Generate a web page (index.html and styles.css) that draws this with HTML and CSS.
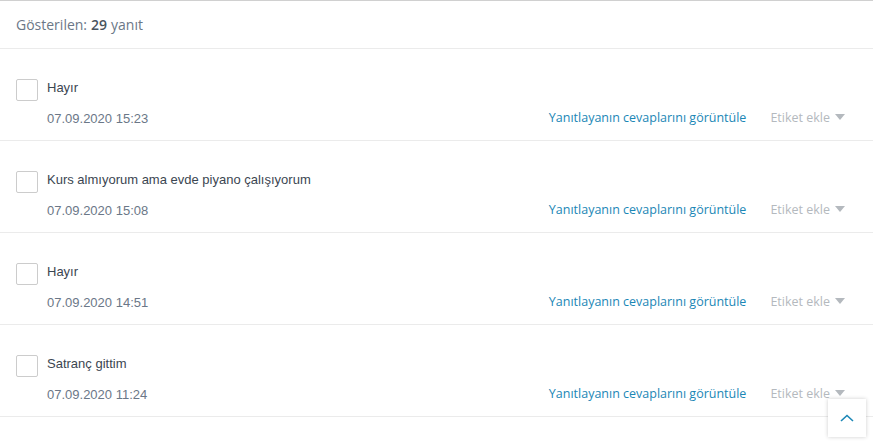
FILE: index.html
```html
<!DOCTYPE html>
<html lang="tr">
<head>
    <meta charset="UTF-8">
    <meta name="viewport" content="width=device-width, initial-scale=1.0">
    <title>Yanıtlar</title>
    <link rel="stylesheet" href="styles.css">
</head>
<body>

    <div class="responses">
        <div class="summary">Gösterilen: <strong>29</strong> yanıt</div>

        <div class="response">
            <span class="check"></span>
            <div class="body">
                <div class="answer">Hayır</div>
                <div class="meta">
                    <span class="date">07.09.2020 15:23</span>
                    <div class="actions">
                        <a class="view" href="#">Yanıtlayanın cevaplarını görüntüle</a>
                        <span class="tag">Etiket ekle <span class="caret"></span></span>
                    </div>
                </div>
            </div>
        </div>

        <div class="response">
            <span class="check"></span>
            <div class="body">
                <div class="answer">Kurs almıyorum ama evde piyano çalışıyorum</div>
                <div class="meta">
                    <span class="date">07.09.2020 15:08</span>
                    <div class="actions">
                        <a class="view" href="#">Yanıtlayanın cevaplarını görüntüle</a>
                        <span class="tag">Etiket ekle <span class="caret"></span></span>
                    </div>
                </div>
            </div>
        </div>

        <div class="response">
            <span class="check"></span>
            <div class="body">
                <div class="answer">Hayır</div>
                <div class="meta">
                    <span class="date">07.09.2020 14:51</span>
                    <div class="actions">
                        <a class="view" href="#">Yanıtlayanın cevaplarını görüntüle</a>
                        <span class="tag">Etiket ekle <span class="caret"></span></span>
                    </div>
                </div>
            </div>
        </div>

        <div class="response">
            <span class="check"></span>
            <div class="body">
                <div class="answer">Satranç gittim</div>
                <div class="meta">
                    <span class="date">07.09.2020 11:24</span>
                    <div class="actions">
                        <a class="view" href="#">Yanıtlayanın cevaplarını görüntüle</a>
                        <span class="tag">Etiket ekle <span class="caret"></span></span>
                    </div>
                </div>
            </div>
        </div>
    </div>

    <button class="to-top" aria-label="Yukarı">
        <svg width="14" height="8" viewBox="0 0 14 8"><path d="M1 7 L7 1.5 L13 7" fill="none" stroke="#1b87b6" stroke-width="1.6"/></svg>
    </button>

</body>
</html>
```

FILE: styles.css
```css
* {
    margin: 0;
    padding: 0;
    box-sizing: border-box;
}

body {
    background: #ffffff;
    font-family: 'Liberation Sans', Arial, sans-serif;
    color: #333e48;
}

.responses {
    border-top: 1px solid #d0d0d0;
}

.summary {
    height: 48px;
    padding: 0 16px;
    display: flex;
    align-items: center;
    font-family: 'Open Sans', sans-serif;
    font-size: 14px;
    color: #6b7787;
    border-bottom: 1px solid #ebebeb;
}

.summary strong {
    color: #4a545e;
    font-weight: 600;
    margin: 0 4px;
}

.response {
    display: flex;
    padding: 30px 28px 14px 16px;
    border-bottom: 1px solid #ebebeb;
}

.check {
    width: 22px;
    height: 22px;
    border: 1px solid #cccccc;
    border-radius: 2px;
    flex-shrink: 0;
    margin-right: 9px;
}

.body {
    flex: 1;
}

.answer {
    font-size: 13px;
    line-height: 18px;
    color: #3b4651;
}

.meta {
    display: flex;
    justify-content: space-between;
    align-items: center;
    margin-top: 11px;
    height: 18px;
}

.date {
    font-size: 13px;
    color: #6b7787;
    margin-top: 3px;
}

.actions {
    display: flex;
    align-items: center;
    gap: 24px;
    font-family: 'Open Sans', sans-serif;
    font-size: 12.5px;
}

.view {
    color: #1b87b6;
    text-decoration: none;
}

.tag {
    color: #b4b9be;
    display: flex;
    align-items: center;
    gap: 5px;
}

.caret {
    width: 0;
    height: 0;
    border-left: 5px solid transparent;
    border-right: 5px solid transparent;
    border-top: 6px solid #b4b9be;
}

.to-top {
    position: fixed;
    right: 7px;
    bottom: 8px;
    width: 38px;
    height: 38px;
    border: none;
    background: #ffffff;
    box-shadow: 0 0 4px rgba(0, 0, 0, 0.2);
    display: flex;
    align-items: center;
    justify-content: center;
    cursor: pointer;
}
```
